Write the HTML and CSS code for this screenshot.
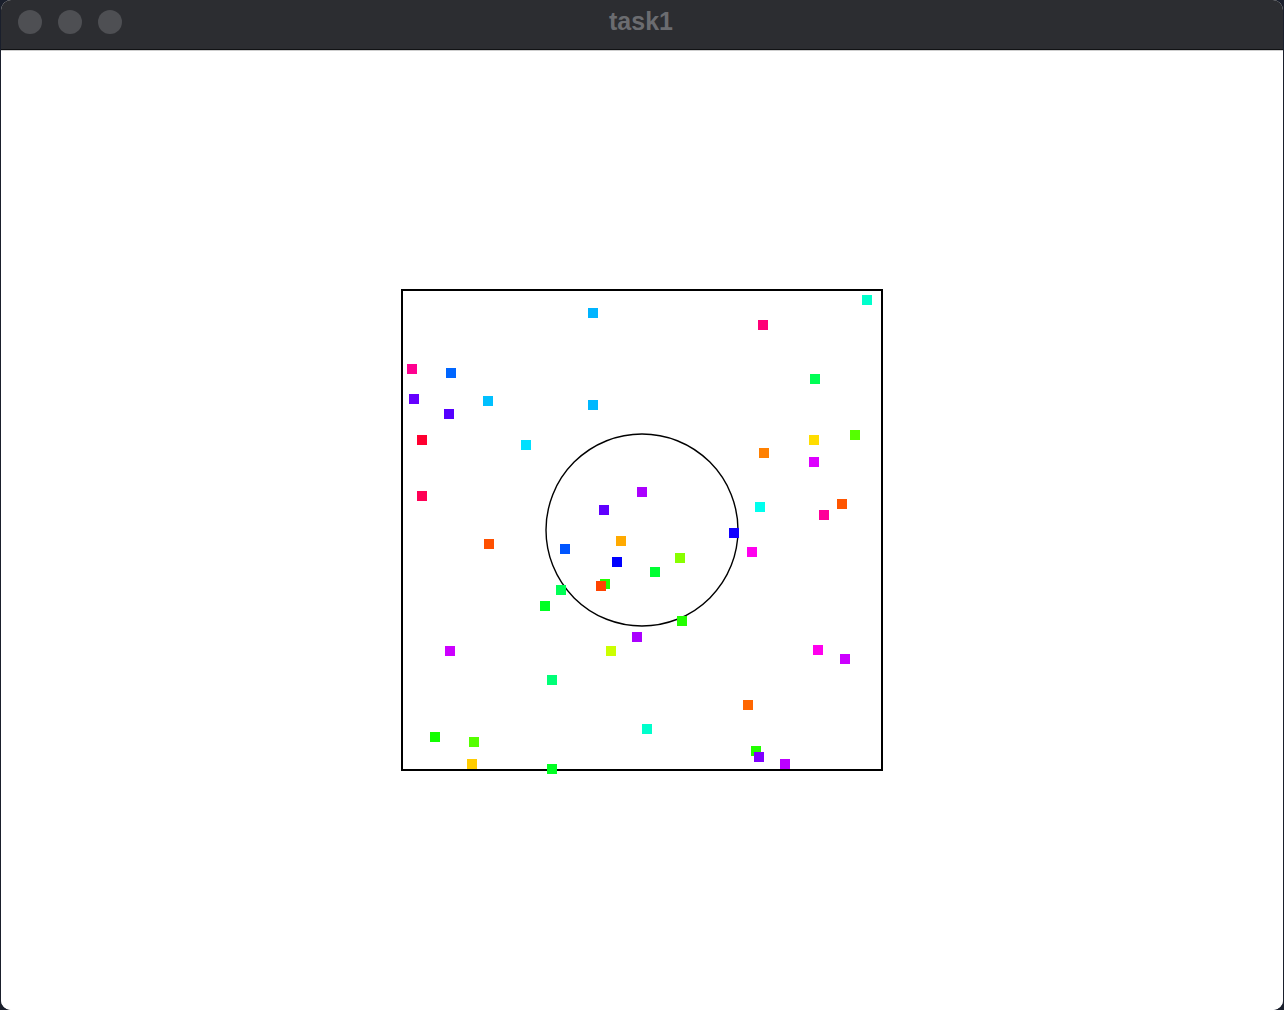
FILE: index.html
```html
<!DOCTYPE html>
<html>
<head>
<meta charset="utf-8">
<link rel="stylesheet" href="styles.css">
<title>task1</title>
</head>
<body>
<div class="window">
  <div class="titlebar">
    <div class="lights"><span class="light"></span><span class="light"></span><span class="light"></span></div>
    <div class="title">task1</div>
    <div></div>
  </div>
  <div class="content">
    <svg class="canvas" width="1282" height="959" viewBox="1 51 1282 959" xmlns="http://www.w3.org/2000/svg" shape-rendering="crispEdges">
      <rect x="402" y="290" width="480" height="480" fill="none" stroke="#000" stroke-width="1.7"/>
      <circle cx="642" cy="530" r="96" fill="none" stroke="#000" stroke-width="1.4" shape-rendering="auto"/>
      <g>
        <rect x="588" y="308" width="10" height="10" fill="#00b4ff"/>
        <rect x="407" y="364" width="10" height="10" fill="#ff0090"/>
        <rect x="446" y="368" width="10" height="10" fill="#0066ff"/>
        <rect x="409" y="394" width="10" height="10" fill="#6600ff"/>
        <rect x="483" y="396" width="10" height="10" fill="#00c0ff"/>
        <rect x="588" y="400" width="10" height="10" fill="#00b8ff"/>
        <rect x="444" y="409" width="10" height="10" fill="#5500ff"/>
        <rect x="417" y="435" width="10" height="10" fill="#ff0030"/>
        <rect x="521" y="440" width="10" height="10" fill="#00e0ff"/>
        <rect x="862" y="295" width="10" height="10" fill="#00ffcc"/>
        <rect x="758" y="320" width="10" height="10" fill="#ff0077"/>
        <rect x="810" y="374" width="10" height="10" fill="#00ff55"/>
        <rect x="809" y="435" width="10" height="10" fill="#ffdd00"/>
        <rect x="850" y="430" width="10" height="10" fill="#55ff00"/>
        <rect x="759" y="448" width="10" height="10" fill="#ff8000"/>
        <rect x="417" y="491" width="10" height="10" fill="#ff0055"/>
        <rect x="484" y="539" width="10" height="10" fill="#ff5000"/>
        <rect x="637" y="487" width="10" height="10" fill="#aa00ff"/>
        <rect x="599" y="505" width="10" height="10" fill="#6000ff"/>
        <rect x="616" y="536" width="10" height="10" fill="#ffaa00"/>
        <rect x="560" y="544" width="10" height="10" fill="#0055ff"/>
        <rect x="612" y="557" width="10" height="10" fill="#0000ff"/>
        <rect x="600" y="579" width="10" height="10" fill="#22ff00"/>
        <rect x="596" y="581" width="10" height="10" fill="#ff4400"/>
        <rect x="556" y="585" width="10" height="10" fill="#00ff55"/>
        <rect x="540" y="601" width="10" height="10" fill="#00ff22"/>
        <rect x="809" y="457" width="10" height="10" fill="#dd00ff"/>
        <rect x="755" y="502" width="10" height="10" fill="#00ffee"/>
        <rect x="837" y="499" width="10" height="10" fill="#ff5500"/>
        <rect x="819" y="510" width="10" height="10" fill="#ff0099"/>
        <rect x="729" y="528" width="10" height="10" fill="#1100ff"/>
        <rect x="747" y="547" width="10" height="10" fill="#ff00ee"/>
        <rect x="675" y="553" width="10" height="10" fill="#88ff00"/>
        <rect x="650" y="567" width="10" height="10" fill="#00ff33"/>
        <rect x="677" y="616" width="10" height="10" fill="#22ff00"/>
        <rect x="632" y="632" width="10" height="10" fill="#aa00ff"/>
        <rect x="445" y="646" width="10" height="10" fill="#cc00ff"/>
        <rect x="606" y="646" width="10" height="10" fill="#ccff00"/>
        <rect x="547" y="675" width="10" height="10" fill="#00ff77"/>
        <rect x="430" y="732" width="10" height="10" fill="#11ff00"/>
        <rect x="469" y="737" width="10" height="10" fill="#55ff00"/>
        <rect x="467" y="759" width="10" height="10" fill="#ffcc00"/>
        <rect x="547" y="764" width="10" height="10" fill="#00ff22"/>
        <rect x="642" y="724" width="10" height="10" fill="#00ffcc"/>
        <rect x="813" y="645" width="10" height="10" fill="#ff00ee"/>
        <rect x="840" y="654" width="10" height="10" fill="#cc00ff"/>
        <rect x="743" y="700" width="10" height="10" fill="#ff6600"/>
        <rect x="751" y="746" width="10" height="10" fill="#22ff00"/>
        <rect x="754" y="752" width="10" height="10" fill="#7f00ff"/>
        <rect x="780" y="759" width="10" height="10" fill="#bb00ff"/>
      </g>
    </svg>
  </div>
</div>
</body>
</html>
```

FILE: styles.css
```css
html, body {
  margin: 0;
  padding: 0;
  background: #1a1f2c;
  overflow: hidden;
}
.window {
  margin-left: 1px;
  width: 1282px;
  height: 1010px;
  border-radius: 10px;
  overflow: hidden;
  background: #ffffff;
  display: flex;
  flex-direction: column;
}
.titlebar {
  height: 49px;
  flex: none;
  background: #2c2d31;
  border-bottom: 1px solid #111214;
  display: grid;
  grid-template-columns: 1fr auto 1fr;
  align-items: center;
}
.lights {
  display: flex;
  gap: 16px;
  padding-left: 17px;
  margin-top: -6px;
}
.light {
  width: 24px;
  height: 24px;
  border-radius: 50%;
  background: #4e4f53;
}
.title {
  font-family: "Liberation Sans", Arial, sans-serif;
  font-weight: bold;
  font-size: 25px;
  color: #6b6c70;
  margin-top: -7px;
  margin-right: 2px;
}
.content {
  flex: 1;
  border-top: 1px solid #cfcfcf;
  background: #ffffff;
}
.canvas {
  display: block;
}
```
